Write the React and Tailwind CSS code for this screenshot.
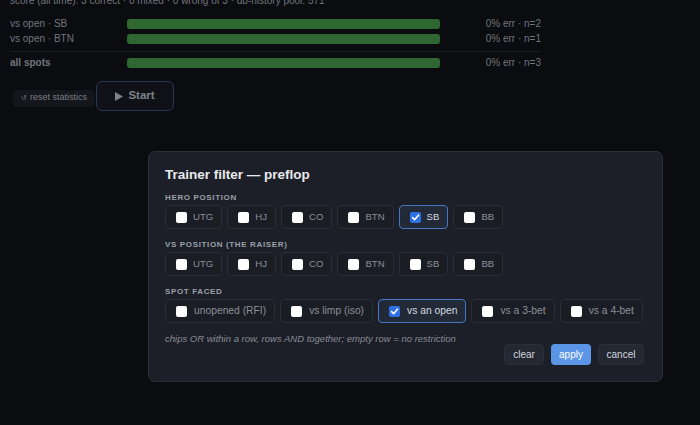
import React, { useState } from "react";

const font = { fontFamily: "'Liberation Sans', Arial, sans-serif" };

function Box({ checked }) {
  return checked ? (
    <span className="flex h-[11px] w-[11px] shrink-0 items-center justify-center rounded-[2px] bg-[#2f6fe6]">
      <svg width="9" height="9" viewBox="0 0 10 10">
        <path d="M1.8 5.2 L4 7.4 L8.3 2.4" fill="none" stroke="white" strokeWidth="1.8" strokeLinecap="round" strokeLinejoin="round" />
      </svg>
    </span>
  ) : (
    <span className="h-[11px] w-[11px] shrink-0 rounded-[2px] bg-white" />
  );
}

function Chip({ label, checked, small }) {
  return (
    <div
      className={
        "flex h-[24px] items-center whitespace-nowrap rounded-[4px] border pl-[10px] pr-[8px] " +
        (small ? "gap-[6px] text-[9.6px] " : "gap-[7px] text-[10.3px] ") +
        (checked
          ? "border-[#4677c2] bg-[#222937] text-[#d6dae0]"
          : "border-[#2a2e37] bg-[#1a1d24] text-[#8a8f98]")
      }
    >
      <Box checked={checked} />
      <span>{label}</span>
    </div>
  );
}

function Section({ title, items, selected, first, small }) {
  return (
    <div className={first ? "mt-[9px]" : "mt-[10px]"}>
      <div className="h-[10px] text-[8px] font-bold leading-[12px] tracking-[0.08em] text-[#9aa0a9]">{title}</div>
      <div className="mt-[3px] flex gap-[5px]">
        {items.map((it) => (
          <Chip key={it} label={it} checked={it === selected} small={small} />
        ))}
      </div>
    </div>
  );
}

function StatRow({ label, right, bold }) {
  return (
    <div className="grid h-[15px] grid-cols-[117px_313px_1fr] items-center">
      <span className={bold ? "font-semibold" : ""}>{label}</span>
      <div className="h-[10px] rounded-[3px] bg-[#2f6733]" />
      <span className="text-right">{right}</span>
    </div>
  );
}

export default function App() {
  const [, setOpen] = useState(true);
  const positions = ["UTG", "HJ", "CO", "BTN", "SB", "BB"];
  const spots = ["unopened (RFI)", "vs limp (iso)", "vs an open", "vs a 3-bet", "vs a 4-bet"];

  return (
    <div className="relative h-[425px] w-[700px] overflow-hidden bg-[#0b0c10]" style={font}>
      <div className="mt-[-6px] w-[541px] pl-[10px] text-[10px] text-[#71757c]">
        <div className="h-[14px] leading-[14px]">
          score (all time): 3 correct · 0 mixed · 0 wrong of 3 · db-history pool: 571
        </div>
        <div className="mt-[8px]">
          <StatRow label="vs open · SB" right="0% err · n=2" />
          <StatRow label="vs open · BTN" right="0% err · n=1" />
        </div>
        <div className="mt-[5px] h-px bg-[#1a1c21]" />
        <div className="mt-[3px]">
          <StatRow label="all spots" right="0% err · n=3" bold />
        </div>
        <div className="mt-[11px] flex items-center">
          <button className="ml-[3px] mt-[4px] flex h-[17px] w-[82px] items-center justify-center gap-[3px] rounded-[4px] bg-[#14161c] text-[9px] text-[#7a7e86]">
            <span className="text-[7px]">↺</span>reset statistics
          </button>
          <button className="ml-[1px] flex h-[30px] w-[78px] items-center justify-center gap-[5px] rounded-[6px] border border-[#283850] bg-[#0f1116] text-[11.5px] font-bold text-[#7d8188]">
            <svg width="8" height="9" viewBox="0 0 8 9">
              <path d="M0 0 L8 4.5 L0 9 Z" fill="#7d8188" />
            </svg>
            Start
          </button>
        </div>
      </div>

      <div className="absolute left-[148px] top-[151px] h-[231px] w-[515px] rounded-[7px] border border-[#2c3038] bg-[#1c1f27] pl-[16px] pr-[18px] pt-[14px]">
        <div className="h-[17px] text-[13.5px] font-bold leading-[17px] text-[#e8eaee]">Trainer filter — preflop</div>
        <Section title="HERO POSITION" items={positions} selected="SB" first small />
        <Section title="VS POSITION (THE RAISER)" items={positions} selected="" small />
        <Section title="SPOT FACED" items={spots} selected="vs an open" />
        <div className="mt-[10px] h-[12px] text-[9.5px] italic leading-[12px] text-[#878c95]">
          chips OR within a row, rows AND together; empty row = no restriction
        </div>
        <div className="mt-[-1px] flex justify-end gap-[7px] text-[10px]">
          <button className="h-[21px] w-[40px] rounded-[4px] border border-[#2b2f38] bg-[#242833] text-[#d2d6dc]">clear</button>
          <button className="h-[21px] w-[40px] rounded-[4px] bg-[#5b95e6] text-white" onClick={() => setOpen(false)}>apply</button>
          <button className="h-[21px] w-[46px] rounded-[4px] border border-[#2b2f38] bg-[#242833] text-[#d2d6dc]">cancel</button>
        </div>
      </div>
    </div>
  );
}
